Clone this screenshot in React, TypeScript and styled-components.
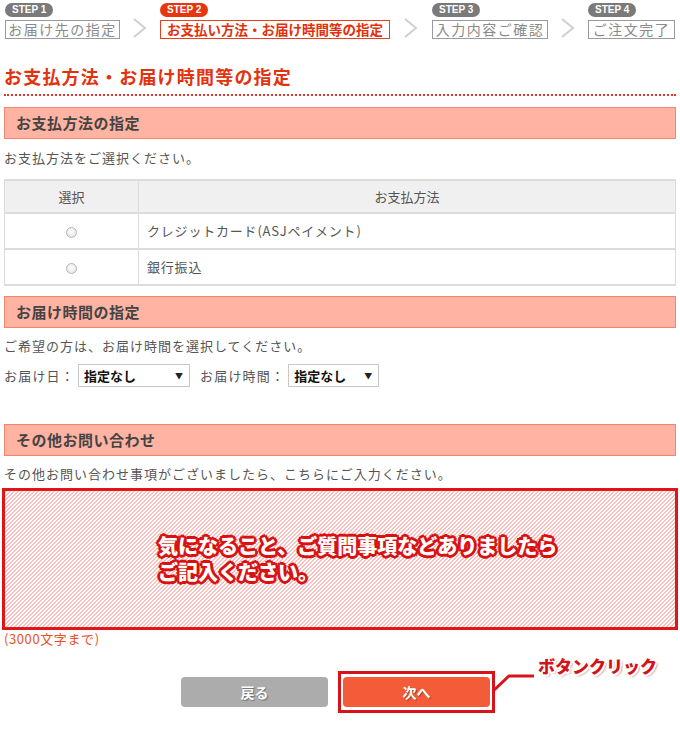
import React from 'react';
import styled, { createGlobalStyle } from 'styled-components';

const GlobalStyle = createGlobalStyle`
  body {
    margin: 0;
    background: #fff;
    font-family: "Noto Sans CJK JP", "Noto Sans", sans-serif;
    color: #555;
  }
`;

const Page = styled.div`
  width: 680px;
  padding: 3px 4px 20px;
  box-sizing: border-box;
`;

const Steps = styled.div`
  display: flex;
  align-items: flex-end;
  padding-left: 1px;
`;

const Step = styled.div`
  display: flex;
  flex-direction: column;
  align-items: flex-start;
  gap: 3px;
`;

const Badge = styled.span<{ $active?: boolean }>`
  display: inline-flex;
  align-items: center;
  justify-content: center;
  height: 14px;
  padding: 0 7px;
  border-radius: 7px;
  background: ${(p) => (p.$active ? '#e6350f' : '#7a7a7a')};
  color: #fff;
  font-family: "Liberation Sans", Arial, sans-serif;
  font-weight: bold;
  font-size: 10px;
  line-height: 14px;
`;

const StepBox = styled.div<{ $active?: boolean; $w: number }>`
  width: ${(p) => p.$w}px;
  height: 19px;
  box-sizing: border-box;
  border: 1px solid ${(p) => (p.$active ? '#e8401c' : '#9a9a9a')};
  color: ${(p) => (p.$active ? '#e3300c' : '#8a8a8a')};
  font-size: ${(p) => (p.$active ? '13.5px' : '14px')};
  font-weight: ${(p) => (p.$active ? 'bold' : 'normal')};
  letter-spacing: ${(p) => (p.$active ? '0' : '1.5px')};
  line-height: 17px;
  text-align: center;
  white-space: nowrap;
  overflow: hidden;
`;

const Chevron = styled.svg`
  flex: none;
`;

const Title = styled.h1`
  margin: 25px 0 0;
  padding-bottom: 6px;
  border-bottom: 2px dotted #e2352a;
  color: #e3320e;
  font-size: 18px;
  letter-spacing: 1.2px;
  font-weight: bold;
  line-height: 24px;
`;

const SectionHead = styled.h2<{ $gap: number }>`
  margin: ${(p) => p.$gap}px 0 0;
  height: 32px;
  box-sizing: border-box;
  border: 1px solid #f7866c;
  background: #ffb3a2;
  color: #444;
  font-size: 15px;
  letter-spacing: 0.5px;
  font-weight: bold;
  line-height: 29px;
  padding-left: 11px;
`;

const Note = styled.p<{ $gap?: number }>`
  margin: ${(p) => p.$gap ?? 9}px 0 0;
  font-size: 13px;
  letter-spacing: 1px;
  line-height: 18px;
  color: #555;
`;

const Table = styled.table`
  margin-top: 12px;
  width: 100%;
  border-collapse: collapse;
  font-size: 13px;
  line-height: 18px;
  color: #555;
  th, td {
    border: 1px solid #dcdcdc;
    border-width: 2px 1px;
    padding: 0;
  }
  th {
    background: #f0f0f0;
    font-weight: normal;
    height: 31px;
    text-align: center;
  }
  td {
    height: 34px;
  }
`;

const RadioCell = styled.td`
  width: 133px;
  text-align: center;
`;

const MethodCell = styled.td`
  && {
    padding-left: 8px;
  }
  letter-spacing: 0.8px;
`;

const Radio = styled.span`
  display: inline-block;
  width: 9px;
  height: 9px;
  border-radius: 50%;
  border: 1px solid #b8b8b8;
  background: radial-gradient(circle at 50% 40%, #fff, #ddd);
  vertical-align: middle;
`;

const SelectRow = styled.div`
  display: flex;
  align-items: center;
  margin-top: 9px;
  font-size: 13px;
  color: #555;
`;

const Label = styled.span<{ $ml?: number }>`
  margin-left: ${(p) => p.$ml ?? 0}px;
  letter-spacing: 1.2px;
  margin-right: 3px;
`;

const Select = styled.div<{ $w: number }>`
  width: ${(p) => p.$w}px;
  height: 23px;
  box-sizing: border-box;
  border: 1px solid #c8c8c8;
  display: flex;
  align-items: center;
  justify-content: space-between;
  padding: 0 6px 0 5px;
  color: #111;
  font-weight: bold;
  font-size: 13px;
  span:last-child {
    font-size: 8px;
    color: #222;
  }
`;

const Inquiry = styled.div`
  margin: 5px -2px 0;
  height: 142px;
  box-sizing: border-box;
  border: 3px solid #df1617;
  background-color: #fff;
  background-image: linear-gradient(
    135deg,
    #f9c0c0 0 25%,
    #fff 25% 50%,
    #f9c0c0 50% 75%,
    #fff 75% 100%
  );
  background-size: 4px 4px;
  display: flex;
  flex-direction: column;
  justify-content: center;
  padding-left: 153px;
`;

const Outline = styled.div`
  color: #fff;
  font-size: 20px;
  font-weight: 900;
  line-height: 26px;
  white-space: nowrap;
  text-shadow:
    2px 0 0 #d81212, -2px 0 0 #d81212, 0 2px 0 #d81212, 0 -2px 0 #d81212,
    2px 2px 0 #d81212, -2px -2px 0 #d81212, 2px -2px 0 #d81212, -2px 2px 0 #d81212,
    3px 0 0 #d81212, -3px 0 0 #d81212, 0 3px 0 #d81212, 0 -3px 0 #d81212;
`;

const Limit = styled.p`
  margin: 1px 0 0;
  font-size: 13px;
  letter-spacing: 0.6px;
  line-height: 16px;
  color: #e8521e;
`;

const Buttons = styled.div`
  display: flex;
  align-items: center;
  gap: 10px;
  margin-top: 24px;
  padding-left: 177px;
`;

const Button = styled.button<{ $primary?: boolean }>`
  width: 147px;
  height: 30px;
  border: none;
  border-radius: 4px;
  background: ${(p) => (p.$primary ? '#f45c39' : '#acacac')};
  color: #fff;
  font-family: inherit;
  font-size: 14px;
  font-weight: bold;
  text-shadow: 1px 1px 1px rgba(0, 0, 0, 0.35);
  cursor: pointer;
`;

const Frame = styled.div`
  position: relative;
  border: 3px solid #d8141a;
  padding: 3px 2px;
  display: flex;
`;

const Callout = styled.div`
  position: absolute;
  left: 100%;
  top: -17px;
  display: flex;
  align-items: flex-start;
`;

const CalloutText = styled.span`
  margin-left: 2px;
  margin-top: -4px;
  color: #d4121a;
  font-size: 17px;
  font-weight: 900;
  white-space: nowrap;
  text-shadow:
    1.5px 0 0 #fff, -1.5px 0 0 #fff, 0 1.5px 0 #fff, 0 -1.5px 0 #fff,
    1.5px 1.5px 0 #fff, -1.5px -1.5px 0 #fff, 1.5px -1.5px 0 #fff, -1.5px 1.5px 0 #fff,
    2px 2px 2px rgba(120, 0, 0, 0.6);
`;

const steps = [
  { label: 'お届け先の指定', w: 115 },
  { label: 'お支払い方法・お届け時間等の指定', w: 230, active: true },
  { label: '入力内容ご確認', w: 116 },
  { label: 'ご注文完了', w: 87 },
];

const chevronWidths = [40, 42, 40];

const App: React.FC = () => {
  return (
    <Page>
      <GlobalStyle />
      <Steps>
        {steps.map((s, i) => (
          <React.Fragment key={s.label}>
            <Step>
              <Badge $active={s.active}>STEP {i + 1}</Badge>
              <StepBox $active={s.active} $w={s.w}>{s.label}</StepBox>
            </Step>
            {i < 3 && (
              <Chevron width={chevronWidths[i]} height={22} viewBox={`0 0 ${chevronWidths[i]} 22`}>
                <polyline
                  points={`${chevronWidths[i] / 2 - 6},2 ${chevronWidths[i] / 2 + 5},11 ${chevronWidths[i] / 2 - 6},20`}
                  fill="none"
                  stroke="#cfcfcf"
                  strokeWidth={2}
                />
              </Chevron>
            )}
          </React.Fragment>
        ))}
      </Steps>

      <Title>お支払方法・お届け時間等の指定</Title>

      <SectionHead $gap={11}>お支払方法の指定</SectionHead>
      <Note $gap={10}>お支払方法をご選択ください。</Note>
      <Table>
        <thead>
          <tr>
            <th>選択</th>
            <th>お支払方法</th>
          </tr>
        </thead>
        <tbody>
          <tr>
            <RadioCell><Radio /></RadioCell>
            <MethodCell>クレジットカード(ASJペイメント)</MethodCell>
          </tr>
          <tr>
            <RadioCell><Radio /></RadioCell>
            <MethodCell>銀行振込</MethodCell>
          </tr>
        </tbody>
      </Table>

      <SectionHead $gap={10}>お届け時間の指定</SectionHead>
      <Note>ご希望の方は、お届け時間を選択してください。</Note>
      <SelectRow>
        <Label>お届け日：</Label>
        <Select $w={112}><span>指定なし</span><span>▼</span></Select>
        <Label $ml={10}>お届け時間：</Label>
        <Select $w={91}><span>指定なし</span><span>▼</span></Select>
      </SelectRow>

      <SectionHead $gap={37}>その他お問い合わせ</SectionHead>
      <Note>その他お問い合わせ事項がございましたら、こちらにご入力ください。</Note>
      <Inquiry>
        <Outline>気になること、ご質問事項などありましたら</Outline>
        <Outline>ご記入ください。</Outline>
      </Inquiry>
      <Limit>(3000文字まで)</Limit>

      <Buttons>
        <Button>戻る</Button>
        <Frame>
          <Button $primary>次へ</Button>
          <Callout>
            <svg width={44} height={36} viewBox="0 0 44 36">
              <polyline points="0,35 17,19 42,19" fill="none" stroke="#d8141a" strokeWidth={3} />
            </svg>
            <CalloutText>ボタンクリック</CalloutText>
          </Callout>
        </Frame>
      </Buttons>
    </Page>
  );
};

export default App;
